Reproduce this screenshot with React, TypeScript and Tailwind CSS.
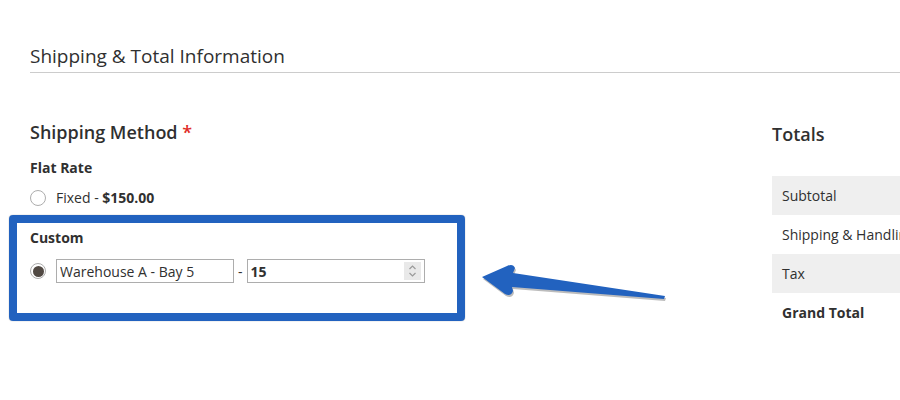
import React from 'react';

function Radio({ checked }: { checked?: boolean }) {
  return (
    <span className="flex h-4 w-4 shrink-0 items-center justify-center rounded-full border border-[#adadad] bg-white">
      {checked && <span className="h-[11px] w-[11px] rounded-full bg-[#514943]" />}
    </span>
  );
}

function Spinner() {
  return (
    <span className="absolute right-[4px] top-[3px] flex h-[18px] w-[17px] flex-col items-center justify-center bg-[#e9e9e9]">
      <svg width="9" height="14" viewBox="0 0 9 14" fill="none" stroke="#9a9a9a" strokeWidth="1.2">
        <path d="M1.5 5 L4.5 2 L7.5 5" />
        <path d="M1.5 9 L4.5 12 L7.5 9" />
      </svg>
    </span>
  );
}

const rows = [
  { label: 'Subtotal', shade: true },
  { label: 'Shipping & Handling', shade: false },
  { label: 'Tax', shade: true },
  { label: 'Grand Total', shade: false, bold: true },
];

export default function App() {
  return (
    <div className="relative h-[400px] w-[900px] overflow-hidden bg-white text-[#303030] font-['Open_Sans',sans-serif]">
      <div className="pl-[30px] pt-[43px]">
        <h2 className="border-b border-[#cccccc] pb-[2px] text-[19px] leading-[27px]">
          Shipping &amp; Total Information
        </h2>

        <div className="flex">
          {/* left column */}
          <div className="w-[742px] shrink-0">
            <div className="mt-[47px] text-[18px] font-semibold leading-[24px]">
              Shipping Method <span className="text-[#e02b27]">*</span>
            </div>
            <div className="mt-[14px] text-[14px] font-bold leading-[20px]">Flat Rate</div>
            <div className="mt-[10px] flex items-center gap-[10px] text-[14px] leading-[20px]">
              <Radio />
              <span>
                Fixed - <b>$150.00</b>
              </span>
            </div>
            <div className="mt-[20px] text-[14px] font-bold leading-[20px]">Custom</div>
            <div className="mt-[11px] flex items-center text-[14px]">
              <Radio checked />
              <input
                readOnly
                value="Warehouse A - Bay 5"
                className="ml-[10px] h-[24px] w-[178px] border border-[#adadad] px-[3px] text-[14px] text-[#303030] outline-none"
              />
              <span className="mx-[4px]">-</span>
              <span className="relative">
                <input
                  readOnly
                  value="15"
                  className="h-[24px] w-[178px] border border-[#adadad] px-[3px] text-[14px] font-bold text-[#303030] outline-none"
                />
                <Spinner />
              </span>
            </div>
          </div>

          {/* right column */}
          <div className="flex-1">
            <div className="mt-[49px] text-[18px] font-semibold leading-[24px]">Totals</div>
            <div className="mt-[30px] w-[300px]">
              {rows.map((r) => (
                <div
                  key={r.label}
                  className={`flex h-[39px] items-center whitespace-nowrap pl-[10px] text-[14px] ${r.shade ? 'bg-[#efefef]' : ''} ${r.bold ? 'font-bold' : ''}`}
                >
                  {r.label}
                </div>
              ))}
            </div>
          </div>
        </div>
      </div>

      {/* highlight annotation */}
      <div className="absolute left-[9px] top-[215px] h-[106px] w-[456px] rounded-[4px] border-[8px] border-[#2262bf] shadow-[0_0_1px_rgba(0,0,0,0.5)]" />

      {/* arrow annotation */}
      <svg className="absolute left-0 top-0" width="900" height="400" viewBox="0 0 900 400">
        <path
          d="M482 277 L507 266 Q513 263 515 268 L513 273 L665 296 L664 299 L512 287 L513 291 Q511 297 505 294 Z"
          fill="#7a7a7a"
          opacity="0.5"
          transform="translate(1 2)"
        />
        <path
          d="M482 277 L507 266 Q513 263 515 268 L513 273 L665 296 L664 299 L512 287 L513 291 Q511 297 505 294 Z"
          fill="#2262bf"
        />
      </svg>
    </div>
  );
}
